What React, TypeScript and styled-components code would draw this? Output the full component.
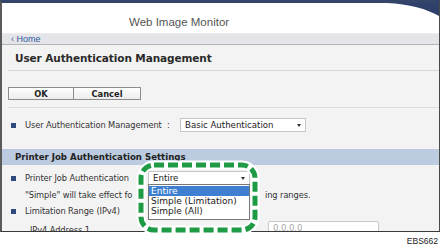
import * as React from "react"
import styled, { createGlobalStyle } from "styled-components"

const GlobalStyle = createGlobalStyle`
  html, body {
    margin: 0;
    padding: 0;
    background: #fff;
  }
  body {
    font-family: "DejaVu Sans", Verdana, sans-serif;
    color: #333;
  }
`

const Page = styled.div`
  position: relative;
  width: 440px;
  height: 246px;
  overflow: hidden;
  background: #fff;
`

const Frame = styled.div`
  width: 440px;
  height: 232px;
  box-sizing: border-box;
  border-left: 2px solid #5a5a5a;
  border-right: 1px solid #4a4a4a;
  border-bottom: 1px solid #3a3a3a;
  border-top: 3px solid #34456a;
  display: flex;
  flex-direction: column;
  overflow: hidden;
  background: #f3f3f3;
`

const Header = styled.div`
  position: relative;
  height: 31px;
  flex: none;
  background: #fff;
  padding: 12px 0 0 127px;
  box-sizing: border-box;
  border-bottom: 1px solid #ececef;
`

const AppName = styled.div`
  font-family: "Liberation Sans", Arial, sans-serif;
  font-size: 11.5px;
  line-height: 14px;
  color: #555;
`

const Swoosh = styled.svg`
  position: absolute;
  top: 0;
  right: 0;
`

const Crumbs = styled.div`
  height: 10px;
  flex: none;
  background: #e4e4e9;
  border-bottom: 1px solid #b4b4b8;
  padding-left: 9px;
  display: flex;
  align-items: center;
  font-family: "Liberation Sans", Arial, sans-serif;
  font-size: 9px;
  color: #2b5a9c;
`

const Content = styled.div`
  flex: 1;
  display: flex;
  flex-direction: column;
`

const TitleBlock = styled.div`
  margin-left: 6px;
  height: 25px;
  flex: none;
  border-bottom: 1px solid #d6d6d6;
  padding-left: 7px;
  display: flex;
  align-items: center;
  font-size: 10.5px;
  font-weight: bold;
  color: #2a2a2a;
  letter-spacing: -0.1px;
`

const ButtonBlock = styled.div`
  margin-left: 6px;
  flex: none;
  padding: 16px 0 7px;
  border-bottom: 1px solid #dedede;
  display: flex;
`

const Button = styled.div`
  width: 66px;
  height: 13px;
  box-sizing: border-box;
  border: 1px solid #8c8c8c;
  background: linear-gradient(#ffffff, #ececec);
  display: flex;
  align-items: center;
  justify-content: center;
  font-size: 8.3px;
  font-weight: bold;
  color: #222;
  & + & {
    border-left: none;
    width: 67px;
  }
`

const Row = styled.div<{ $h: number; $top?: number; $indent?: number }>`
  flex: none;
  height: ${(p) => p.$h}px;
  margin-top: ${(p) => p.$top ?? 0}px;
  padding-left: ${(p) => p.$indent ?? 9}px;
  display: flex;
  align-items: center;
  font-size: 8.3px;
  letter-spacing: -0.1px;
  color: #333;
  white-space: nowrap;
`

const Bullet = styled.span`
  width: 5px;
  height: 5px;
  background: #2e4a7c;
  margin-right: 9px;
  flex: none;
`

const Label = styled.span<{ $w?: number }>`
  width: ${(p) => (p.$w ? `${p.$w}px` : "auto")};
  flex: none;
  overflow: hidden;
`

const Colon = styled.span`
  width: 13px;
  flex: none;
`

const Select = styled.div<{ $w: number }>`
  position: relative;
  width: ${(p) => p.$w}px;
  height: 14px;
  box-sizing: border-box;
  border: 1px solid #c6c6c6;
  background: #fff;
  display: flex;
  align-items: center;
  padding-left: 4px;
  font-size: 8.6px;
  letter-spacing: 0;
  color: #222;
  &::after {
    content: "";
    position: absolute;
    right: 4px;
    top: 5px;
    border-left: 2.5px solid transparent;
    border-right: 2.5px solid transparent;
    border-top: 3px solid #333;
  }
`

const Section = styled.div`
  margin-top: 17px;
  flex: none;
  height: 16px;
  background: #bccbe0;
  padding-left: 13px;
  display: flex;
  align-items: center;
  font-size: 8.6px;
  font-weight: bold;
  color: #222;
`

const DropWrap = styled.div`
  position: relative;
`

const List = styled.div`
  position: absolute;
  left: 0;
  top: 13px;
  width: 102px;
  box-sizing: border-box;
  border: 1px solid #777;
  background: #fff;
  padding: 1px 0 3px;
  z-index: 2;
`

const Item = styled.div<{ $on?: boolean }>`
  height: 10px;
  display: flex;
  align-items: center;
  padding-left: 2px;
  font-size: 9px;
  letter-spacing: 0;
  color: ${(p) => (p.$on ? "#fff" : "#222")};
  background: ${(p) => (p.$on ? "#3e7fd2" : "transparent")};
`

const Gap = styled.span<{ $w: number }>`
  width: ${(p) => p.$w}px;
  flex: none;
`

const Input = styled.div`
  width: 111px;
  height: 14px;
  align-self: flex-start;
  margin-top: -1px;
  box-sizing: border-box;
  border: 1px solid #c8c8c8;
  border-radius: 2px;
  background: #fff;
  padding-left: 4px;
  display: flex;
  align-items: center;
  color: #aaa;
  font-size: 8.6px;
`

const Callout = styled.svg`
  position: absolute;
  left: 131px;
  top: 155px;
  z-index: 5;
`

const Code = styled.div`
  position: absolute;
  right: 2px;
  bottom: 0px;
  font-family: "Liberation Sans", Arial, sans-serif;
  font-size: 8.5px;
  color: #222;
`

export default function App() {
  return (
    <Page>
      <GlobalStyle />
      <Frame>
        <Header>
          <AppName>Web Image Monitor</AppName>
          <Swoosh width="60" height="16" viewBox="0 0 60 16">
            <path d="M0 0 H60 V13 C48 6 30 1 8 0 Z" fill="#2f416a" />
          </Swoosh>
        </Header>
        <Crumbs>‹ Home</Crumbs>
        <Content>
          <TitleBlock>User Authentication Management</TitleBlock>
          <ButtonBlock>
            <Button>OK</Button>
            <Button>Cancel</Button>
          </ButtonBlock>
          <Row $h={14} $top={10}>
            <Bullet />
            <Label $w={142}>User Authentication Management</Label>
            <Colon>:</Colon>
            <Select $w={126}>Basic Authentication</Select>
          </Row>
          <Section>Printer Job Authentication Settings</Section>
          <Row $h={14} $top={6}>
            <Bullet />
            <Label $w={123}>Printer Job Authentication</Label>
            <DropWrap>
              <Select $w={102}>Entire</Select>
              <List>
                <Item $on>Entire</Item>
                <Item>Simple (Limitation)</Item>
                <Item>Simple (All)</Item>
              </List>
            </DropWrap>
          </Row>
          <Row $h={16} $top={2} $indent={23}>
            <Label $w={116}>"Simple" will take effect fo</Label>
            <Gap $w={124} />
            <Label>ing ranges.</Label>
          </Row>
          <Row $h={16}>
            <Bullet />
            Limitation Range (IPv4)
          </Row>
          <Row $h={16} $top={3} $indent={28}>
            <Label $w={238}>IPv4 Address 1</Label>
            <Input>0.0.0.0</Input>
          </Row>
        </Content>
      </Frame>
      <Callout width="130" height="82" viewBox="0 0 130 82">
        <rect x="10" y="10" width="114" height="65" rx="13" fill="none" stroke="#fff" strokeWidth="9" />
        <rect x="10" y="10" width="114" height="65" rx="13" fill="none" stroke="#1f9a45" strokeWidth="5" strokeDasharray="10 4" />
      </Callout>
      <Code>EBS662</Code>
    </Page>
  )
}
